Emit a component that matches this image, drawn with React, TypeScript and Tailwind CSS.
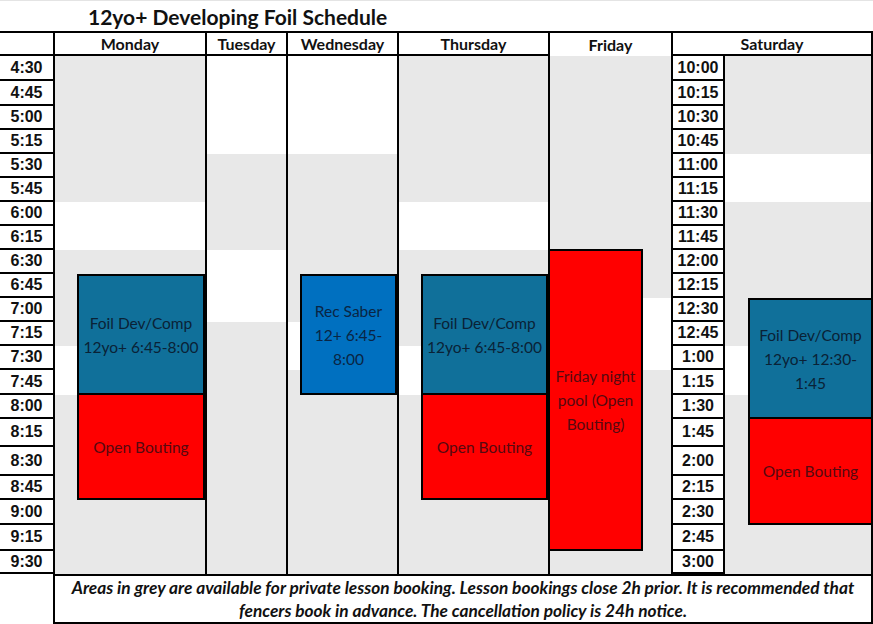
import React from "react";

const leftTimes = ["4:30", "4:45", "5:00", "5:15", "5:30", "5:45", "6:00", "6:15", "6:30", "6:45", "7:00", "7:15", "7:30", "7:45", "8:00", "8:15", "8:30", "8:45", "9:00", "9:15", "9:30"];
const satTimes = ["10:00", "10:15", "10:30", "10:45", "11:00", "11:15", "11:30", "11:45", "12:00", "12:15", "12:30", "12:45", "1:00", "1:15", "1:30", "1:45", "2:00", "2:15", "2:30", "2:45", "3:00"];

// full class strings so tailwind picks them up
const rowStarts = ["row-start-2", "row-start-3", "row-start-4", "row-start-5", "row-start-6", "row-start-7", "row-start-8", "row-start-9", "row-start-10", "row-start-11", "row-start-12", "row-start-13", "row-start-14", "row-start-15", "row-start-16", "row-start-17", "row-start-18", "row-start-19", "row-start-20", "row-start-21", "row-start-22"];

type Seg = { cls: string; grey: boolean };

const segments: Seg[] = [
    // Monday
    { cls: "col-start-2 row-start-2 row-span-6", grey: true },
    { cls: "col-start-2 row-start-8 row-span-2", grey: false },
    { cls: "col-start-2 row-start-10 row-span-4", grey: true },
    { cls: "col-start-2 row-start-14 row-span-2", grey: false },
    { cls: "col-start-2 row-start-16 row-span-7", grey: true },
    // Tuesday
    { cls: "col-start-3 row-start-2 row-span-4", grey: false },
    { cls: "col-start-3 row-start-6 row-span-4", grey: true },
    { cls: "col-start-3 row-start-10 row-span-3", grey: false },
    { cls: "col-start-3 row-start-13 row-span-10", grey: true },
    // Wednesday
    { cls: "col-start-4 row-start-2 row-span-4", grey: false },
    { cls: "col-start-4 row-start-6 row-span-7", grey: true },
    { cls: "col-start-4 row-start-13 row-span-2", grey: false },
    { cls: "col-start-4 row-start-15 row-span-8", grey: true },
    // Thursday
    { cls: "col-start-5 row-start-2 row-span-6", grey: true },
    { cls: "col-start-5 row-start-8 row-span-2", grey: false },
    { cls: "col-start-5 row-start-10 row-span-4", grey: true },
    { cls: "col-start-5 row-start-14 row-span-2", grey: false },
    { cls: "col-start-5 row-start-16 row-span-7", grey: true },
    // Friday
    { cls: "col-start-6 row-start-2 row-span-10", grey: true },
    { cls: "col-start-6 row-start-12 row-span-3", grey: false },
    { cls: "col-start-6 row-start-15 row-span-8", grey: true },
    // Saturday
    { cls: "col-start-8 row-start-2 row-span-4 border-r-2", grey: true },
    { cls: "col-start-8 row-start-6 row-span-2 border-r-2", grey: false },
    { cls: "col-start-8 row-start-8 row-span-6 border-r-2", grey: true },
    { cls: "col-start-8 row-start-14 row-span-2 border-r-2", grey: false },
    { cls: "col-start-8 row-start-16 row-span-7 border-r-2", grey: true },
];

const events = [
    { cls: "col-start-2 row-start-11 row-span-5 ml-[24px] bg-[#10709a] text-[#0a2236]", lines: ["Foil Dev/Comp", "12yo+ 6:45-8:00"] },
    { cls: "col-start-2 row-start-16 row-span-4 ml-[24px] border-t-0 bg-[#ff0000] text-[#560910]", lines: ["Open Bouting"] },
    { cls: "col-start-4 row-start-11 row-span-5 ml-[14px] bg-[#0070c0] text-[#0a2544]", lines: ["Rec Saber", "12+ 6:45-", "8:00"] },
    { cls: "col-start-5 row-start-11 row-span-5 ml-[24px] bg-[#10709a] text-[#0a2236]", lines: ["Foil Dev/Comp", "12yo+ 6:45-8:00"] },
    { cls: "col-start-5 row-start-16 row-span-4 ml-[24px] border-t-0 bg-[#ff0000] text-[#560910]", lines: ["Open Bouting"] },
    { cls: "col-start-6 row-start-10 row-span-12 w-[95px] -mt-px bg-[#ff0000] text-[#560910]", lines: ["Friday night", "pool (Open", "Bouting)"] },
    { cls: "col-start-8 row-start-12 row-span-5 ml-[25px] bg-[#10709a] text-[#0a2236]", lines: ["Foil Dev/Comp", "12yo+ 12:30-", "1:45"] },
    { cls: "col-start-8 row-start-17 row-span-4 ml-[25px] border-t-0 bg-[#ff0000] text-[#560910]", lines: ["Open Bouting"] },
];

const headFont = "font-['Lato','Liberation_Sans',sans-serif]";

export default function App() {
    return (
        <div className={`w-[873px] h-[624px] bg-white overflow-hidden ${headFont}`}>
            {/* Title */}
            <div className="h-[31px] border-t border-[#e4e4e4] pl-[88px] flex items-center">
                <h1 className="text-[21px] font-bold text-[#111] leading-none">12yo+ Developing Foil Schedule</h1>
            </div>

            <div className="grid grid-cols-[53px_152px_81px_111px_151px_123px_52px_150px] grid-rows-[25px_25px_25px_24px_24px_24px_24px_24px_24px_24px_24px_24px_24px_24px_25px_24px_28px_29px_24px_25px_26px_23px_50px]">
                {/* Header */}
                <div className="col-start-1 row-start-1 border-t-2 border-b-2 border-black" />
                {["Monday", "Tuesday", "Wednesday", "Thursday"].map((d) => (
                    <div key={d} className="row-start-1 pt-px border-t-2 border-b-2 border-l-2 border-black flex items-center justify-center text-[16px] font-bold text-[#111]">
                        {d}
                    </div>
                ))}
                <div className="col-start-6 row-start-1 border-t-2 border-l-2 border-black flex items-center justify-center text-[16px] font-bold text-[#111]">
                    Friday
                </div>
                <div className="col-start-7 col-span-2 row-start-1 pt-px border-2 border-black flex items-center justify-center text-[16px] font-bold text-[#111]">
                    Saturday
                </div>

                {/* Time columns */}
                {leftTimes.map((t, i) => (
                    <div key={t} className={`col-start-1 ${rowStarts[i]} border-b-2 border-black flex items-center justify-center font-['Liberation_Sans',sans-serif] font-bold text-[16px] text-[#111]`}>
                        {t}
                    </div>
                ))}
                {satTimes.map((t, i) => (
                    <div key={t} className={`col-start-7 ${rowStarts[i]} border-l-2 border-b-2 border-black bg-white flex items-center justify-center font-['Liberation_Sans',sans-serif] font-bold text-[16px] text-[#111]`}>
                        {t}
                    </div>
                ))}

                {/* Day backgrounds */}
                {segments.map((s, i) => (
                    <div key={i} className={`${s.cls} border-l-2 border-black ${s.grey ? "bg-[#e8e8e8]" : "bg-white"}`} />
                ))}

                {/* Sessions */}
                {events.map((e, i) => (
                    <div key={i} className={`${e.cls} z-10 border-2 border-black flex flex-col items-center justify-center text-center text-[15.5px] leading-[24px]`}>
                        {e.lines.map((l) => (
                            <span key={l}>{l}</span>
                        ))}
                    </div>
                ))}

                {/* Footer */}
                <div className="col-start-1 row-start-23" />
                <div className="col-start-2 col-span-7 row-start-23 border-2 border-black flex flex-col items-center justify-center text-[17.3px] leading-[23px] font-bold italic text-[#111]">
                    <span>Areas in grey are available for private lesson booking. Lesson bookings close 2h prior. It is recommended that</span>
                    <span>fencers book in advance. The cancellation policy is 24h notice.</span>
                </div>
            </div>
        </div>
    );
}
